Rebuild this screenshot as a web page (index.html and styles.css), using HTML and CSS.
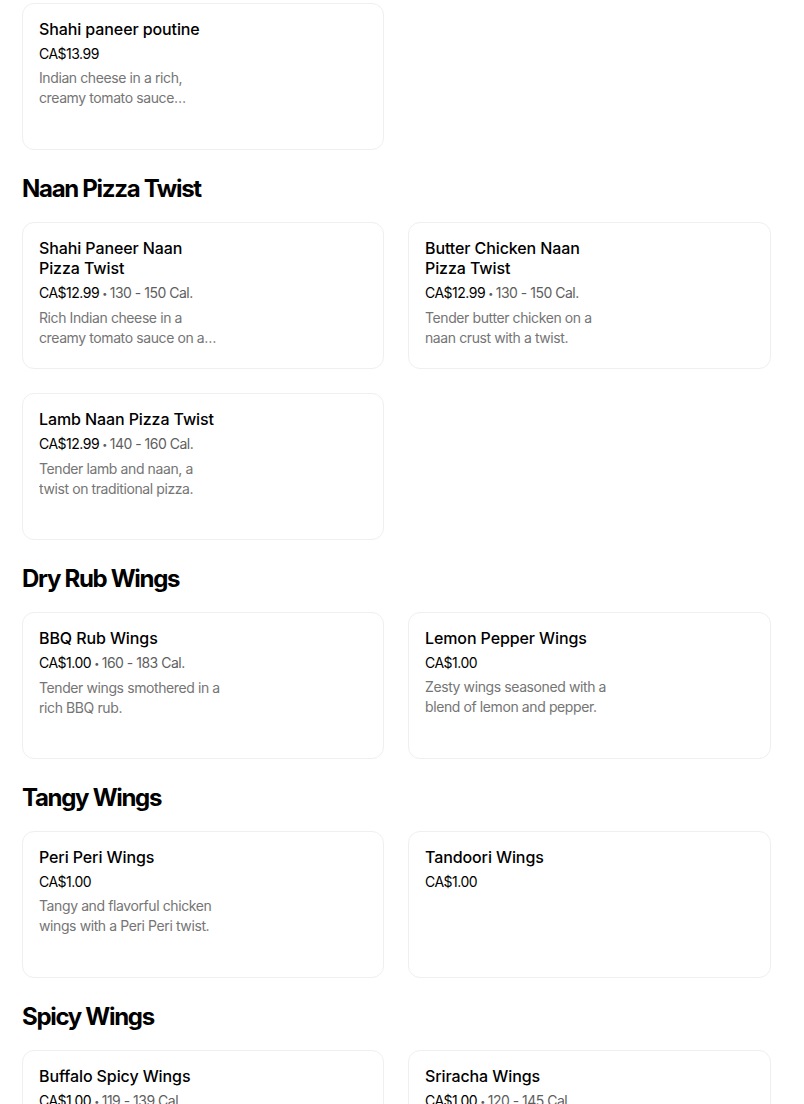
FILE: index.html
```html
<!DOCTYPE html>
<html lang="en">
<head>
<meta charset="utf-8">
<title>Menu</title>
<link rel="stylesheet" href="styles.css">
</head>
<body>
<main class="menu">
  <section class="section section-first">
    <div class="grid">
      <div class="card">
        <div class="info">
          <div class="title">Shahi paneer poutine</div>
          <div class="meta"><span class="price">CA$13.99</span></div>
          <div class="desc">Indian cheese in a rich, creamy tomato sauce…</div>
        </div>
      </div>
    </div>
  </section>

  <section class="section">
    <h2 class="heading">Naan Pizza Twist</h2>
    <div class="grid">
      <div class="card">
        <div class="info">
          <div class="title">Shahi Paneer Naan Pizza Twist</div>
          <div class="meta"><span class="price">CA$12.99</span><span class="dot">•</span><span class="cal">130 - 150 Cal.</span></div>
          <div class="desc">Rich Indian cheese in a creamy tomato sauce on a…</div>
        </div>
      </div>
      <div class="card">
        <div class="info">
          <div class="title">Butter Chicken Naan Pizza Twist</div>
          <div class="meta"><span class="price">CA$12.99</span><span class="dot">•</span><span class="cal">130 - 150 Cal.</span></div>
          <div class="desc">Tender butter chicken on a naan crust with a twist.</div>
        </div>
      </div>
      <div class="card">
        <div class="info">
          <div class="title">Lamb Naan Pizza Twist</div>
          <div class="meta"><span class="price">CA$12.99</span><span class="dot">•</span><span class="cal">140 - 160 Cal.</span></div>
          <div class="desc">Tender lamb and naan, a twist on traditional pizza.</div>
        </div>
      </div>
    </div>
  </section>

  <section class="section">
    <h2 class="heading">Dry Rub Wings</h2>
    <div class="grid">
      <div class="card">
        <div class="info">
          <div class="title">BBQ Rub Wings</div>
          <div class="meta"><span class="price">CA$1.00</span><span class="dot">•</span><span class="cal">160 - 183 Cal.</span></div>
          <div class="desc">Tender wings smothered in a rich BBQ rub.</div>
        </div>
      </div>
      <div class="card">
        <div class="info">
          <div class="title">Lemon Pepper Wings</div>
          <div class="meta"><span class="price">CA$1.00</span></div>
          <div class="desc">Zesty wings seasoned with a blend of lemon and pepper.</div>
        </div>
      </div>
    </div>
  </section>

  <section class="section">
    <h2 class="heading">Tangy Wings</h2>
    <div class="grid">
      <div class="card">
        <div class="info">
          <div class="title">Peri Peri Wings</div>
          <div class="meta"><span class="price">CA$1.00</span></div>
          <div class="desc">Tangy and flavorful chicken wings with a Peri Peri twist.</div>
        </div>
      </div>
      <div class="card">
        <div class="info">
          <div class="title">Tandoori Wings</div>
          <div class="meta"><span class="price">CA$1.00</span></div>
        </div>
      </div>
    </div>
  </section>

  <section class="section">
    <h2 class="heading">Spicy Wings</h2>
    <div class="grid">
      <div class="card">
        <div class="info">
          <div class="title">Buffalo Spicy Wings</div>
          <div class="meta"><span class="price">CA$1.00</span><span class="dot">•</span><span class="cal">119 - 139 Cal.</span></div>
        </div>
      </div>
      <div class="card">
        <div class="info">
          <div class="title">Sriracha Wings</div>
          <div class="meta"><span class="price">CA$1.00</span><span class="dot">•</span><span class="cal">120 - 145 Cal.</span></div>
        </div>
      </div>
    </div>
  </section>
</main>
</body>
</html>
```

FILE: styles.css
```css
* { box-sizing: border-box; }

html, body {
  margin: 0;
  padding: 0;
  background: #ffffff;
}

body {
  font-family: Inter, "Noto Sans", "Liberation Sans", sans-serif;
  color: #000000;
  -webkit-font-smoothing: antialiased;
}

.menu {
  width: 749px;
  margin-left: 22px;
  padding-top: 3px;
}

.section + .section {
  margin-top: 23px;
}

.heading {
  margin: 0 0 17px 0;
  font-size: 24px;
  line-height: 32px;
  font-weight: 700;
  letter-spacing: -1.3px;
  color: #000000;
}

.grid {
  display: grid;
  grid-template-columns: 362px 363px;
  column-gap: 24px;
  row-gap: 24px;
}

.card {
  height: 147px;
  border: 1px solid #efefef;
  border-radius: 12px;
  padding: 15px 16px 16px 16px;
  display: flex;
  background: #ffffff;
}

.info {
  width: 182px;
  display: flex;
  flex-direction: column;
}

.title {
  font-size: 16px;
  line-height: 20px;
  font-weight: 500;
  letter-spacing: -0.1px;
  color: #000000;
}

.meta {
  margin-top: 5px;
  font-size: 14px;
  line-height: 20px;
  letter-spacing: -0.5px;
  white-space: nowrap;
}

.price {
  color: #000000;
}

.dot {
  margin: 0 3px;
  font-size: 9px;
  color: #5e5e5e;
  vertical-align: 1px;
}

.cal {
  color: #5e5e5e;
}

.desc {
  margin-top: 4px;
  font-size: 14px;
  line-height: 20px;
  letter-spacing: -0.4px;
  color: #757575;
  display: -webkit-box;
  -webkit-line-clamp: 2;
  -webkit-box-orient: vertical;
  overflow: hidden;
}
```
